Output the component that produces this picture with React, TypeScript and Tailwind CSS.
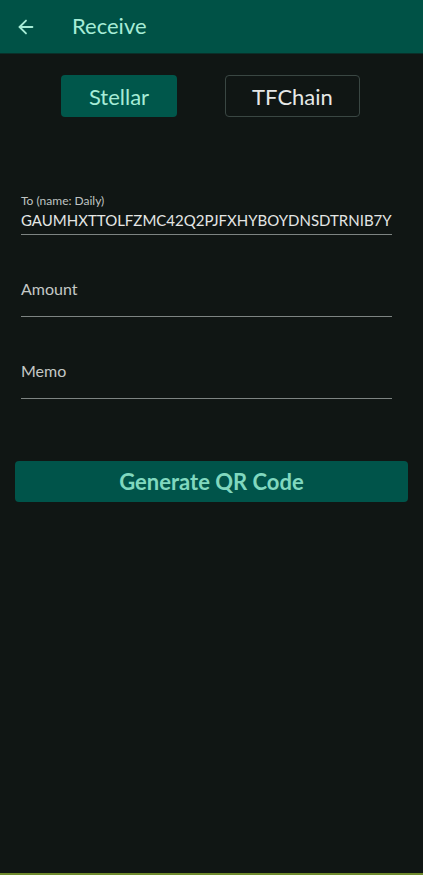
import { ArrowLeft } from 'lucide-react'

const Field = ({ label, value }: { label: string; value?: string }) => {
  if (value) {
    return (
      <div className="ml-[21px] mr-[31px] h-[44px] border-b border-[#7d8482] flex flex-col justify-end pb-[5px]">
        <span className="text-[12px] leading-[14px] text-[#bfc4c2]">{label}</span>
        <span className="text-[15px] leading-[18px] mt-[3px] text-[#e4e6e5] whitespace-nowrap">{value}</span>
      </div>
    )
  }
  return (
    <div className="ml-[21px] mr-[31px] h-[44px] border-b border-[#7d8482] flex items-end pb-[18px]">
      <span className="text-[16px] leading-[19px] text-[#c4c8c6]">{label}</span>
    </div>
  )
}

export default function App() {
  return (
    <div className="w-[423px] h-[875px] bg-[#101614] flex flex-col font-['Lato','Noto_Sans',sans-serif] border-b-2 border-[#6f8a2c]">
      {/* Header */}
      <header className="h-[54px] bg-[#005246] border-b border-[#0a2f29] flex items-center shrink-0">
        <ArrowLeft className="ml-[15px] w-[22px] h-[22px] text-[#a6ecd6]" strokeWidth={2} />
        <span className="ml-[35px] text-[22px] text-[#a6ecd6] mb-[2px]">Receive</span>
      </header>

      {/* Chain toggle */}
      <div className="flex justify-center gap-[48px] mt-[21px] pr-[2px]">
        <button className="w-[116px] h-[42px] rounded-[4px] bg-[#00574b] text-[22px] text-[#a6ecd6]">Stellar</button>
        <button className="w-[135px] h-[42px] rounded-[4px] border border-[#3a4743] text-[22px] text-[#e6e8e7]">TFChain</button>
      </div>

      {/* Form */}
      <div className="flex flex-col gap-[38px] mt-[74px]">
        <Field label="To (name: Daily)" value="GAUMHXTTOLFZMC42Q2PJFXHYBOYDNSDTRNIB7Y" />
        <Field label="Amount" />
        <Field label="Memo" />
      </div>

      <button className="mx-[15px] mt-[62px] h-[41px] rounded-[4px] bg-[#00544a] text-[22px] font-bold text-[#80d8bf]">
        Generate QR Code
      </button>
    </div>
  )
}
